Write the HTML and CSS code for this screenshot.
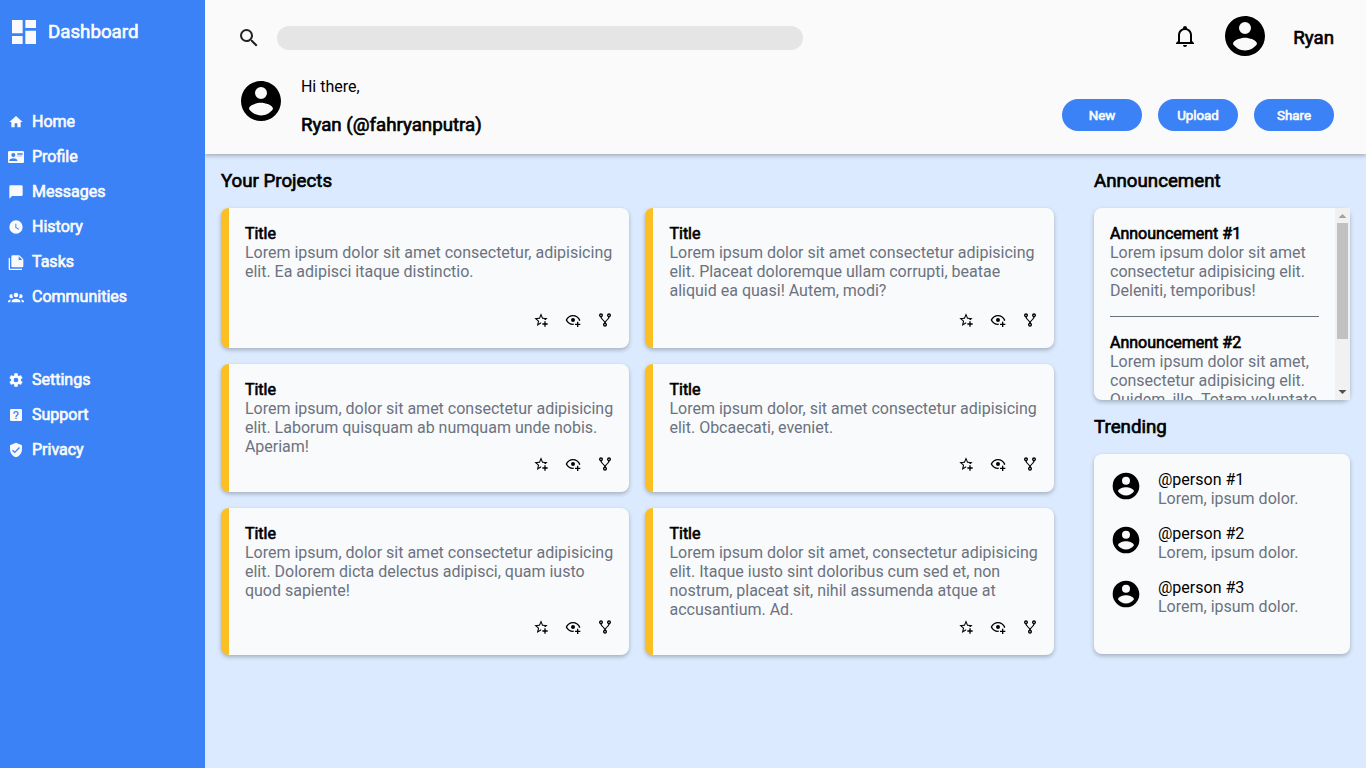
FILE: index.html
```html
<!DOCTYPE html>
<html lang="en">
<head>
<meta charset="utf-8">
<title>Dashboard</title>
<link rel="stylesheet" href="styles.css">
</head>
<body>
<svg class="sprite" aria-hidden="true">
  <symbol id="account" viewBox="0 0 24 24"><path d="M12,19.2C9.5,19.2 7.29,17.92 6,16C6.03,14 10,12.9 12,12.9C14,12.9 17.97,14 18,16C16.71,17.92 14.5,19.2 12,19.2M12,5A3,3 0 0,1 15,8A3,3 0 0,1 12,11A3,3 0 0,1 9,8A3,3 0 0,1 12,5M12,2A10,10 0 0,0 2,12A10,10 0 0,0 12,22A10,10 0 0,0 22,12C22,6.47 17.5,2 12,2Z"/></symbol>
  <symbol id="star" viewBox="0 0 24 24"><path d="M5.8 21L7.4 14L2 9.2L9.2 8.6L12 2L14.8 8.6L22 9.2L18.8 12H18C17.3 12 16.6 12.1 15.9 12.4L18.1 10.5L13.7 10.1L12 6.1L10.3 10.1L5.9 10.5L9.2 13.4L8.2 17.7L12 15.4L12.5 15.7C12.3 16.2 12.1 16.8 12.1 17.3L5.8 21M17 14V17H14V19H17V22H19V19H22V17H19V14H17Z"/></symbol>
  <symbol id="eye" viewBox="0 0 24 24"><path d="M12,4.5C7,4.5 2.73,7.61 1,12C2.73,16.39 7,19.5 12,19.5C12.36,19.5 12.72,19.5 13.08,19.45C13.03,19.13 13,18.82 13,18.5C13,18.14 13.04,17.78 13.1,17.42C12.74,17.46 12.37,17.5 12,17.5C8.24,17.5 4.83,15.36 3.18,12C4.83,8.64 8.24,6.5 12,6.5C15.76,6.5 19.17,8.64 20.82,12C20.7,12.24 20.56,12.45 20.43,12.68C21.09,12.84 21.72,13.11 22.29,13.5C22.56,13 22.8,12.5 23,12C21.27,7.61 17,4.5 12,4.5M12,9A3,3 0 0,0 9,12A3,3 0 0,0 12,15A3,3 0 0,0 15,12A3,3 0 0,0 12,9M18,14.5V17.5H15V19.5H18V22.5H20V19.5H23V17.5H20V14.5H18Z"/></symbol>
  <symbol id="fork" viewBox="0 0 24 24"><path d="M6,2A3,3 0 0,1 9,5C9,6.28 8.19,7.38 7.06,7.81C7.15,8.27 7.39,8.83 8,9.63C9,10.92 11,12.83 12,14.17C13,12.83 15,10.92 16,9.63C16.61,8.83 16.85,8.27 16.94,7.81C15.81,7.38 15,6.28 15,5A3,3 0 0,1 18,2A3,3 0 0,1 21,5C21,6.32 20.14,7.45 18.95,7.85C18.87,8.37 18.64,9 18,9.83C17,11.17 15,13.08 14,14.38C13.39,15.17 13.15,15.73 13.06,16.19C14.19,16.62 15,17.72 15,19A3,3 0 0,1 12,22A3,3 0 0,1 9,19C9,17.72 9.81,16.62 10.94,16.19C10.85,15.73 10.61,15.17 10,14.38C9,13.08 7,11.17 6,9.83C5.36,9 5.13,8.37 5.05,7.85C3.86,7.45 3,6.32 3,5A3,3 0 0,1 6,2M6,4A1,1 0 0,0 5,5A1,1 0 0,0 6,6A1,1 0 0,0 7,5A1,1 0 0,0 6,4M18,4A1,1 0 0,0 17,5A1,1 0 0,0 18,6A1,1 0 0,0 19,5A1,1 0 0,0 18,4M12,18A1,1 0 0,0 11,19A1,1 0 0,0 12,20A1,1 0 0,0 13,19A1,1 0 0,0 12,18Z"/></symbol>
</svg>
<div class="layout">
  <nav class="sidebar">
    <div class="brand">
      <svg viewBox="0 0 24 24"><path d="M13,3V9H21V3M13,21H21V11H13M3,21H11V15H3M3,13H11V3H3V13Z"/></svg>
      <h3>Dashboard</h3>
    </div>
    <ul class="menu">
      <li><svg viewBox="0 0 24 24"><path d="M10,20V14H14V20H19V12H22L12,3L2,12H5V20H10Z"/></svg><span>Home</span></li>
      <li><svg viewBox="0 0 24 24"><path d="M2,3H22C23.05,3 24,3.95 24,5V19C24,20.05 23.05,21 22,21H2C0.95,21 0,20.05 0,19V5C0,3.95 0.95,3 2,3M14,6V7H22V6H14M14,8V9H21.5L22,9V8H14M14,10V11H21V10H14M8,13.91C6,13.91 2,15 2,17V18H14V17C14,15 10,13.91 8,13.91M8,6A3,3 0 0,0 5,9A3,3 0 0,0 8,12A3,3 0 0,0 11,9A3,3 0 0,0 8,6Z"/></svg><span>Profile</span></li>
      <li><svg viewBox="0 0 24 24"><path d="M20,2H4A2,2 0 0,0 2,4V22L6,18H20A2,2 0 0,0 22,16V4C22,2.89 21.1,2 20,2Z"/></svg><span>Messages</span></li>
      <li><svg viewBox="0 0 24 24"><path d="M12,2A10,10 0 0,0 2,12A10,10 0 0,0 12,22A10,10 0 0,0 22,12A10,10 0 0,0 12,2M16.2,16.2L11,13V7H12.5V12.2L17,14.9L16.2,16.2Z"/></svg><span>History</span></li>
      <li><svg viewBox="0 0 24 24"><path d="M16,9H21.5L16,3.5V9M7,2H17L23,8V18A2,2 0 0,1 21,20H7C5.89,20 5,19.1 5,18V4A2,2 0 0,1 7,2M3,6V22H21V24H3A2,2 0 0,1 1,22V6H3Z"/></svg><span>Tasks</span></li>
      <li><svg viewBox="0 0 24 24"><path d="M12,5.5A3.5,3.5 0 0,1 15.5,9A3.5,3.5 0 0,1 12,12.5A3.5,3.5 0 0,1 8.5,9A3.5,3.5 0 0,1 12,5.5M5,8C5.56,8 6.08,8.15 6.53,8.42C6.38,9.85 6.8,11.27 7.66,12.38C7.16,13.34 6.16,14 5,14A3,3 0 0,1 2,11A3,3 0 0,1 5,8M19,8A3,3 0 0,1 22,11A3,3 0 0,1 19,14C17.84,14 16.84,13.34 16.34,12.38C17.2,11.27 17.62,9.85 17.47,8.42C17.92,8.15 18.44,8 19,8M5.5,18.25C5.5,16.18 8.41,14.5 12,14.5C15.59,14.5 18.5,16.18 18.5,18.25V20H5.5V18.25M0,20V18.5C0,17.11 1.89,15.94 4.45,15.6C3.86,16.28 3.5,17.22 3.5,18.25V20H0M24,20H20.5V18.25C20.5,17.22 20.14,16.28 19.55,15.6C22.11,15.94 24,17.11 24,18.5V20Z"/></svg><span>Communities</span></li>
    </ul>
    <ul class="menu">
      <li><svg viewBox="0 0 24 24"><path d="M12,15.5A3.5,3.5 0 0,1 8.5,12A3.5,3.5 0 0,1 12,8.5A3.5,3.5 0 0,1 15.5,12A3.5,3.5 0 0,1 12,15.5M19.43,12.97C19.47,12.65 19.5,12.33 19.5,12C19.5,11.67 19.47,11.34 19.43,11L21.54,9.37C21.73,9.22 21.78,8.95 21.66,8.73L19.66,5.27C19.54,5.05 19.27,4.96 19.05,5.05L16.56,6.05C16.04,5.66 15.5,5.32 14.87,5.07L14.5,2.42C14.46,2.18 14.25,2 14,2H10C9.75,2 9.54,2.18 9.5,2.42L9.13,5.07C8.5,5.32 7.96,5.66 7.44,6.05L4.95,5.05C4.73,4.96 4.46,5.05 4.34,5.27L2.34,8.73C2.21,8.95 2.27,9.22 2.46,9.37L4.57,11C4.53,11.34 4.5,11.67 4.5,12C4.5,12.33 4.53,12.65 4.57,12.97L2.46,14.63C2.27,14.78 2.21,15.05 2.34,15.27L4.34,18.73C4.46,18.95 4.73,19.03 4.95,18.95L7.44,17.94C7.96,18.34 8.5,18.68 9.13,18.93L9.5,21.58C9.54,21.82 9.75,22 10,22H14C14.25,22 14.46,21.82 14.5,21.58L14.87,18.93C15.5,18.67 16.04,18.34 16.56,17.94L19.05,18.95C19.27,19.03 19.54,18.95 19.66,18.73L21.66,15.27C21.78,15.05 21.73,14.78 21.54,14.63L19.43,12.97Z"/></svg><span>Settings</span></li>
      <li><svg viewBox="0 0 24 24"><path d="M11,18H13V16H11V18M12,6A4,4 0 0,0 8,10H10A2,2 0 0,1 12,8A2,2 0 0,1 14,10C14,12 11,11.75 11,15H13C13,12.75 16,12.5 16,10A4,4 0 0,0 12,6M5,3H19A2,2 0 0,1 21,5V19A2,2 0 0,1 19,21H5A2,2 0 0,1 3,19V5A2,2 0 0,1 5,3Z" fill-rule="evenodd"/></svg><span>Support</span></li>
      <li><svg viewBox="0 0 24 24"><path d="M10,17L6,13L7.41,11.59L10,14.17L16.59,7.58L18,9M12,1L3,5V11C3,16.55 6.84,21.74 12,23C17.16,21.74 21,16.55 21,11V5L12,1Z"/></svg><span>Privacy</span></li>
    </ul>
  </nav>
  <div class="page">
    <header class="header">
      <div class="topbar">
        <svg class="icon-md search-icon" viewBox="0 0 24 24"><path d="M9.5,3A6.5,6.5 0 0,1 16,9.5C16,11.11 15.41,12.59 14.44,13.73L14.71,14H15.5L20.5,19L19,20.5L14,15.5V14.71L13.73,14.44C12.59,15.41 11.11,16 9.5,16A6.5,6.5 0 0,1 3,9.5A6.5,6.5 0 0,1 9.5,3M9.5,5C7,5 5,7 5,9.5C5,12 7,14 9.5,14C12,14 14,12 14,9.5C14,7 12,5 9.5,5Z"/></svg>
        <div class="search"></div>
        <div class="user">
          <svg class="icon-md" viewBox="0 0 24 24"><path d="M10,21H14A2,2 0 0,1 12,23A2,2 0 0,1 10,21M21,19V20H3V19L5,17V11C5,7.9 7.03,5.17 10,4.29C10,4.19 10,4.1 10,4A2,2 0 0,1 12,2A2,2 0 0,1 14,4C14,4.1 14,4.19 14,4.29C16.97,5.17 19,7.9 19,11V17L21,19M17,11A5,5 0 0,0 12,6A5,5 0 0,0 7,11V18H17V11Z"/></svg>
          <svg class="avatar"><use href="#account"/></svg>
          <h3>Ryan</h3>
        </div>
      </div>
      <div class="welcome">
        <svg class="avatar"><use href="#account"/></svg>
        <div class="greeting">
          <p>Hi there,</p>
          <h3>Ryan (@fahryanputra)</h3>
        </div>
        <div class="actions">
          <button>New</button>
          <button>Upload</button>
          <button>Share</button>
        </div>
      </div>
    </header>
    <main class="content">
      <section class="projects">
        <h3>Your Projects</h3>
        <div class="project-grid">
          <article class="project"><h4>Title</h4><p>Lorem ipsum dolor sit amet consectetur, adipisicing elit. Ea adipisci itaque distinctio.</p><div class="tools"><svg><use href="#star"/></svg><svg><use href="#eye"/></svg><svg><use href="#fork"/></svg></div></article>
          <article class="project"><h4>Title</h4><p>Lorem ipsum dolor sit amet consectetur adipisicing elit. Placeat doloremque ullam corrupti, beatae aliquid ea quasi! Autem, modi?</p><div class="tools"><svg><use href="#star"/></svg><svg><use href="#eye"/></svg><svg><use href="#fork"/></svg></div></article>
          <article class="project"><h4>Title</h4><p>Lorem ipsum, dolor sit amet consectetur adipisicing elit. Laborum quisquam ab numquam unde nobis. Aperiam!</p><div class="tools"><svg><use href="#star"/></svg><svg><use href="#eye"/></svg><svg><use href="#fork"/></svg></div></article>
          <article class="project"><h4>Title</h4><p>Lorem ipsum dolor, sit amet consectetur adipisicing elit. Obcaecati, eveniet.</p><div class="tools"><svg><use href="#star"/></svg><svg><use href="#eye"/></svg><svg><use href="#fork"/></svg></div></article>
          <article class="project"><h4>Title</h4><p>Lorem ipsum, dolor sit amet consectetur adipisicing elit. Dolorem dicta delectus adipisci, quam iusto quod sapiente!</p><div class="tools"><svg><use href="#star"/></svg><svg><use href="#eye"/></svg><svg><use href="#fork"/></svg></div></article>
          <article class="project"><h4>Title</h4><p>Lorem ipsum dolor sit amet, consectetur adipisicing elit. Itaque iusto sint doloribus cum sed et, non nostrum, placeat sit, nihil assumenda atque at accusantium. Ad.</p><div class="tools"><svg><use href="#star"/></svg><svg><use href="#eye"/></svg><svg><use href="#fork"/></svg></div></article>
        </div>
      </section>
      <aside class="side">
        <h3>Announcement</h3>
        <div class="panel announcements">
          <div class="announcement-list">
            <div class="announcement"><h4>Announcement #1</h4><p>Lorem ipsum dolor sit amet consectetur adipisicing elit. Deleniti, temporibus!</p></div>
            <div class="announcement"><h4>Announcement #2</h4><p>Lorem ipsum dolor sit amet, consectetur adipisicing elit. Quidem, illo. Totam voluptate</p></div>
          </div>
          <div class="scrollbar">
            <svg class="arrow-up" viewBox="0 0 15 15"><path d="M3.5 10L7.5 6L11.5 10Z"/></svg>
            <div class="thumb"></div>
            <svg class="arrow-down" viewBox="0 0 15 15"><path d="M3.5 5L7.5 9L11.5 5Z"/></svg>
          </div>
        </div>
        <h3>Trending</h3>
        <div class="panel trending">
          <div class="person"><svg><use href="#account"/></svg><div><p class="handle">@person #1</p><p>Lorem, ipsum dolor.</p></div></div>
          <div class="person"><svg><use href="#account"/></svg><div><p class="handle">@person #2</p><p>Lorem, ipsum dolor.</p></div></div>
          <div class="person"><svg><use href="#account"/></svg><div><p class="handle">@person #3</p><p>Lorem, ipsum dolor.</p></div></div>
        </div>
      </aside>
    </main>
  </div>
</div>
</body>
</html>
```
FILE: styles.css
```css
* { box-sizing: border-box; margin: 0; padding: 0; }
body { font: 16px/19px Roboto, sans-serif; color: #000; overflow: hidden; }
svg { display: block; flex: none; fill: currentColor; }
.sprite { display: none; }
h3, h4, .menu span, button { font-weight: 400; -webkit-text-stroke: 0.65px currentColor; }
h3 { font-size: 18.72px; line-height: 22px; }
h4 { font-size: 16px; }

.layout { display: grid; grid-template-columns: 15% 1fr; height: 100vh; }

.sidebar { position: relative; z-index: 1; background: #3b82f6; color: #fafafa; padding: 16px 8px; display: flex; flex-direction: column; gap: 64px; }
.brand { display: flex; align-items: center; gap: 8px; }
.brand svg { width: 32px; height: 32px; }
.menu { list-style: none; display: flex; flex-direction: column; gap: 16px; }
.menu li { display: flex; gap: 8px; align-items: flex-end; }
.menu svg { width: 16px; height: 16px; margin-bottom: 1px; }

.page { display: flex; flex-direction: column; background: #dbeafe; }
.header { height: 154px; padding: 12px 32px 0; background: #fafafa; box-shadow: 0 2px 4px rgba(0, 0, 0, 0.25); display: flex; flex-direction: column; gap: 17px; }
.topbar { display: flex; align-items: center; height: 48px; }
.icon-md { width: 24px; height: 24px; }
.search-icon { color: #222; margin-top: 4px; }
.search { width: 526px; height: 24px; margin: 4px 0 0 16px; border-radius: 12px; background: #e5e5e5; }
.user { display: flex; align-items: center; gap: 24px; margin-left: auto; }
.user h3 { padding-top: 3px; }
.avatar { width: 48px; height: 48px; }
.welcome { display: flex; gap: 16px; }
.greeting { display: flex; flex-direction: column; gap: 18px; }
.actions { display: flex; gap: 16px; margin: 22px 0 0 auto; }
button { width: 80px; height: 32px; border: 0; border-radius: 16px; background: #3b82f6; color: #fafafa; font-family: inherit; font-size: 13.33px; }

.content { display: flex; gap: 40px; padding: 16px; }
.projects { flex: 1; }
.project-grid { display: grid; grid-template-columns: 1fr 1fr; grid-template-rows: 140px auto auto; gap: 16px; margin-top: 16px; }
.project { display: flex; flex-direction: column; padding: 16px 16px 20px; border-left: 8px solid #fbbf24; border-radius: 8px; background: #f9fafb; box-shadow: 0 2px 4px rgba(0, 0, 0, 0.25); }
p { color: #6b7280; }
.greeting p, .handle { color: #000; }
.tools { display: flex; justify-content: flex-end; gap: 16px; margin-top: auto; }
.tools svg { width: 16px; height: 16px; }

.side { width: 256px; display: flex; flex-direction: column; gap: 16px; }
.panel { border-radius: 8px; background: #f9fafb; box-shadow: 0 2px 4px rgba(0, 0, 0, 0.25); }
.announcements { height: 192px; display: flex; }
.announcement-list { flex: 1; padding: 16px; overflow: hidden; }
.announcement { padding-bottom: 16px; }
.announcement + .announcement { border-top: 1px solid #6b7280; padding-top: 16px; }
.scrollbar { width: 15px; background: #f1f1f1; display: flex; flex-direction: column; }
.scrollbar svg { width: 15px; height: 15px; }
.arrow-up { color: #a3a3a3; }
.arrow-down { color: #505050; margin-top: auto; }
.thumb { height: 116px; margin: 0 2px; background: #c1c1c1; }
.trending { height: 200px; padding: 16px; display: flex; flex-direction: column; gap: 16px; }
.person { display: flex; gap: 16px; }
.person svg { width: 32px; height: 32px; }
```
